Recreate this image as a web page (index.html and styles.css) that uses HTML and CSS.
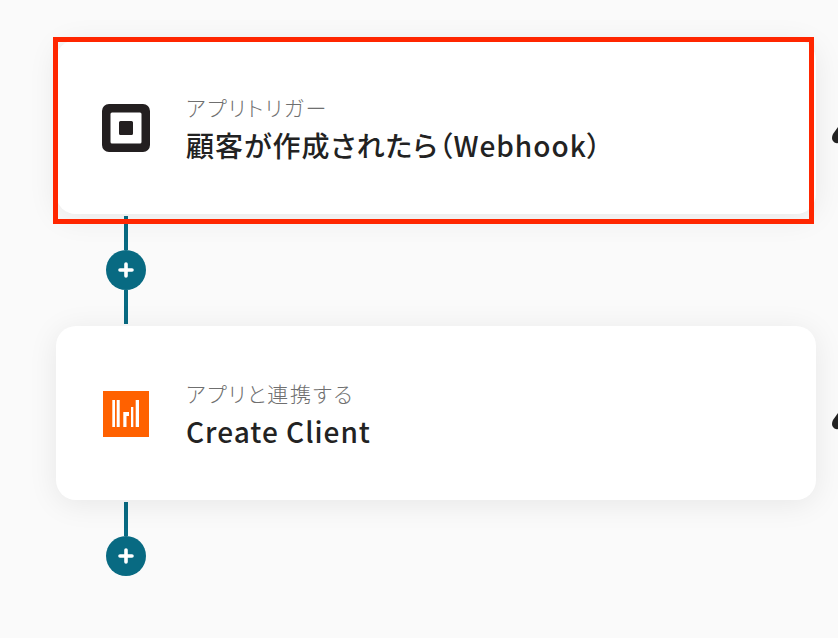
FILE: index.html
```html
<!DOCTYPE html>
<html lang="ja">
<head>
<meta charset="utf-8">
<title>Flow</title>
<link rel="stylesheet" href="styles.css">
</head>
<body>
<main class="flow">
  <section class="step step-selected">
    <div class="card">
      <svg class="icon" width="50" height="50" viewBox="0 0 50 50" aria-hidden="true">
        <path fill="#231f20" fill-rule="evenodd" d="M8 1h34a7 7 0 0 1 7 7v34a7 7 0 0 1-7 7H8a7 7 0 0 1-7-7V8a7 7 0 0 1 7-7zM11 9.500a1.500 1.500 0 0 0-1.500 1.500v28a1.500 1.500 0 0 0 1.500 1.500h28a1.500 1.500 0 0 0 1.500-1.500V11A1.500 1.500 0 0 0 39 9.500H11zM19.500 18h11a1.500 1.500 0 0 1 1.500 1.500v11a1.500 1.500 0 0 1-1.500 1.500h-11a1.500 1.500 0 0 1-1.500-1.500v-11a1.500 1.500 0 0 1 1.500-1.500z"/>
      </svg>
      <div class="text">
        <p class="label">アプリトリガー</p>
        <p class="title">顧客が作成されたら（Webhook）</p>
      </div>
    </div>
    <svg class="blob" width="6" height="18" viewBox="0 0 6 18" aria-hidden="true"><path fill="#222" d="M6 0L1 7Q0 9 0 11C0 14 3 17 6 16z"/></svg>
  </section>
  <div class="connector">
    <div class="line"></div>
    <div class="add"><svg width="16" height="16" viewBox="0 0 16 16" aria-hidden="true"><path d="M8 2v12M2 8h12" stroke="#fff" stroke-width="3.600" stroke-linecap="round"/></svg></div>
    <div class="line"></div>
  </div>
  <section class="step">
    <div class="card">
      <svg class="icon" width="50" height="50" viewBox="0 0 50 50" aria-hidden="true">
        <rect x="2" y="2" width="46" height="46" fill="#ff6100"/>
        <path fill="#fff" d="M11.300 11H14v27h-2.700zM15.700 11h3v27h-3zM22.300 23H28v4h-2.500v11h-3.200zM30 18h2.300v20H30zM34.700 11H38v27h-3.300z"/>
      </svg>
      <div class="text">
        <p class="label">アプリと連携する</p>
        <p class="title">Create Client</p>
      </div>
    </div>
    <svg class="blob" width="6" height="18" viewBox="0 0 6 18" aria-hidden="true"><path fill="#222" d="M6 0L1 7Q0 9 0 11C0 14 3 17 6 16z"/></svg>
  </section>
  <div class="connector">
    <div class="line"></div>
    <div class="add"><svg width="16" height="16" viewBox="0 0 16 16" aria-hidden="true"><path d="M8 2v12M2 8h12" stroke="#fff" stroke-width="3.600" stroke-linecap="round"/></svg></div>
  </div>
</main>
</body>
</html>
```

FILE: styles.css
```css
html, body {
  margin: 0;
  height: 100%;
  overflow: hidden;
  background: #fafafa;
}
.flow {
  display: flex;
  flex-direction: column;
  padding: 40px 0 0 56px;
  width: 760px;
  font-family: "Noto Sans CJK JP", "Noto Sans", sans-serif;
  font-feature-settings: "palt";
}
.step {
  position: relative;
  height: 174px;
}
.card {
  box-sizing: border-box;
  height: 174px;
  display: flex;
  align-items: center;
  gap: 35px;
  padding: 2px 0 0 45px;
  background: #fff;
  border-radius: 20px;
  box-shadow: 0 4px 30px rgba(0, 0, 0, 0.08);
}
.step-selected::after {
  content: "";
  position: absolute;
  left: -3px;
  top: -3px;
  width: 751px;
  height: 177px;
  border: 5px solid #ff2600;
  pointer-events: none;
}
.icon {
  flex: none;
}
.text {
  display: flex;
  flex-direction: column;
  gap: 4px;
  padding-top: 2px;
}
.label {
  margin: 0;
  font-size: 21px;
  line-height: 28px;
  font-weight: 300;
  color: #6f6f6f;
  letter-spacing: 1.7px;
}
.title {
  margin: 0;
  font-size: 28px;
  line-height: 40px;
  font-weight: 500;
  color: #222;
  letter-spacing: 1px;
}
.blob {
  position: absolute;
  left: 776px;
  top: 87px;
}
.connector {
  display: flex;
  flex-direction: column;
  align-items: center;
  width: 40px;
  margin-left: 50px;
  height: 112px;
  padding-top: 2px;
  box-sizing: border-box;
}
.line {
  width: 4px;
  height: 34px;
  background: #086a82;
}
.add {
  flex: none;
  width: 40px;
  height: 40px;
  border-radius: 50%;
  background: #086a82;
  display: flex;
  align-items: center;
  justify-content: center;
}
```
